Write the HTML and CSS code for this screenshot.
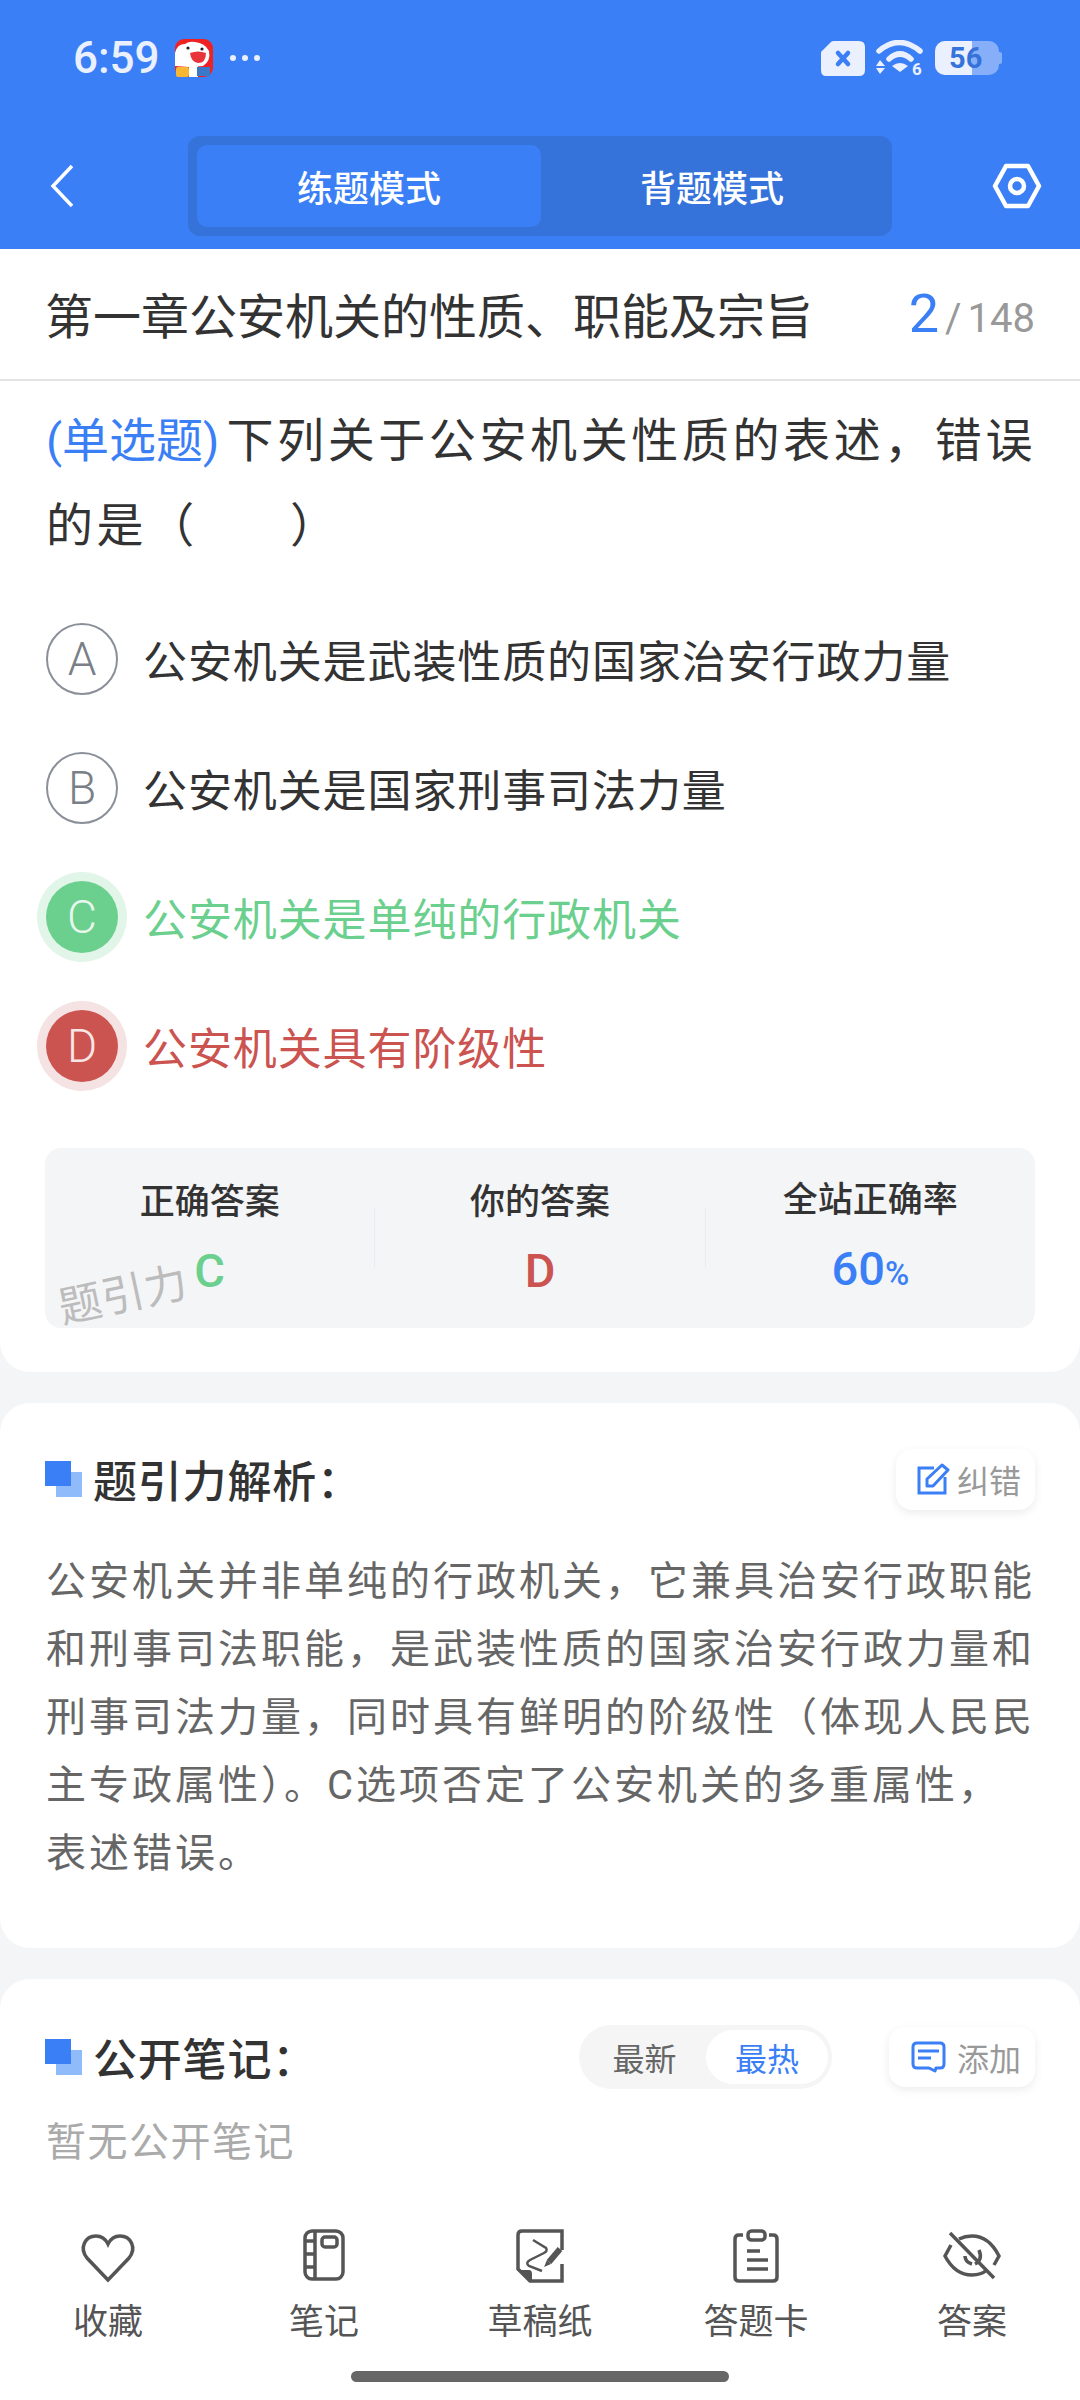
FILE: index.html
```html
<!DOCTYPE html>
<html lang="zh-CN">
<head>
    <meta charset="UTF-8">
    <meta name="viewport" content="width=device-width, initial-scale=1.0">
    <title>练题模式</title>
    <link rel="stylesheet" href="styles.css">
</head>
<body>
    <div class="page">
        <header class="top">
            <div class="status">
                <div class="status-left">
                    <span class="time">6:59</span>
                    <svg class="app-icon" viewBox="0 0 38 38">
                        <rect width="38" height="38" rx="9" fill="#ee2222"/>
                        <path d="M0 14 Q2 5 10 5 Q14 2 20 3 Q30 4 34 12 Q36 22 28 27 L14 28 L0 27 Z" fill="#fff"/>
                        <circle cx="13" cy="9" r="1.6" fill="#222"/>
                        <circle cx="27" cy="10" r="1.6" fill="#222"/>
                        <path d="M15 14 Q23 11 31 14 Q31 24 23 24 Q16 23 15 14 Z" fill="#e8353c"/>
                        <rect x="1" y="28" width="13" height="10" rx="2" fill="#f7b733"/>
                        <rect x="14" y="27" width="9" height="11" fill="#fff"/>
                        <rect x="22" y="28" width="13" height="9" fill="#3c78c8"/>
                    </svg>
                    <span class="dots"><i></i><i></i><i></i></span>
                </div>
                <div class="status-right">
                    <svg class="sim" width="44" height="35" viewBox="0 0 44 35">
                        <path d="M13 0 H38 Q44 0 44 6 V29 Q44 35 38 35 H5 Q0 35 0 29 V12 Q0 10 2 9 L10 1 Q11 0 13 0 Z" fill="#eaf0fe"/>
                        <path d="M17 12 L27 23 M27 12 L17 23" stroke="#3b7ff6" stroke-width="4.5" stroke-linecap="round"/>
                    </svg>
                    <svg class="wifi" width="48" height="42" viewBox="0 0 48 42">
                        <path d="M3 11 Q23 -6 44 11" fill="none" stroke="#eaf0fe" stroke-width="5.5" stroke-linecap="round"/>
                        <path d="M13 19 Q24 9 35 19" fill="none" stroke="#eaf0fe" stroke-width="5.5" stroke-linecap="round"/>
                        <path d="M16 26 Q24 20 32 26 L24 32 Z" fill="#eaf0fe"/>
                        <path d="M4 20 L9 26 H0 Z M0 28 H9 L4 34 Z" fill="#eaf0fe"/>
                        <text x="36" y="35" class="wifi-six">6</text>
                    </svg>
                    <div class="battery">
                        <span class="battery-level"></span>
                        <span class="battery-num">56</span>
                        <span class="battery-tip"></span>
                    </div>
                </div>
            </div>
            <div class="toolbar">
                <svg class="back" width="24" height="44" viewBox="0 0 24 44">
                    <path d="M22 2 L3 22 L22 42" fill="none" stroke="#fff" stroke-width="3.5"/>
                </svg>
                <div class="mode-switch">
                    <div class="mode on">练题模式</div>
                    <div class="mode">背题模式</div>
                </div>
                <svg class="gear" width="50" height="46" viewBox="0 0 50 46">
                    <path d="M14 3 H36 L47 23 L36 43 H14 L3 23 Z" fill="none" stroke="#fff" stroke-width="4.5" stroke-linejoin="round"/>
                    <circle cx="25" cy="23" r="7" fill="none" stroke="#fff" stroke-width="4.5"/>
                </svg>
            </div>
        </header>

        <main class="content">
            <section class="card question-card">
                <div class="chapter">
                    <h1>第一章公安机关的性质、职能及宗旨</h1>
                    <div class="progress"><b>2</b><i>/</i>148</div>
                </div>
                <p class="question"><span class="q-type">(单选题)</span>下列关于公安机关性质的表述，错误的是（&emsp;&ensp;&thinsp;）</p>
                <ul class="options">
                    <li class="option"><span class="letter">A</span>公安机关是武装性质的国家治安行政力量</li>
                    <li class="option"><span class="letter">B</span>公安机关是国家刑事司法力量</li>
                    <li class="option right"><span class="letter">C</span>公安机关是单纯的行政机关</li>
                    <li class="option wrong"><span class="letter">D</span>公安机关具有阶级性</li>
                </ul>
                <div class="summary">
                    <div class="cell">
                        <div class="cell-label">正确答案</div>
                        <div class="cell-value green">C</div>
                    </div>
                    <span class="divider"></span>
                    <div class="cell">
                        <div class="cell-label">你的答案</div>
                        <div class="cell-value red">D</div>
                    </div>
                    <span class="divider"></span>
                    <div class="cell">
                        <div class="cell-label">全站正确率</div>
                        <div class="cell-value blue">60<small>%</small></div>
                    </div>
                    <span class="watermark">题引力</span>
                </div>
            </section>

            <section class="card analysis-card">
                <div class="card-head">
                    <h2 class="card-title"><span class="mark"></span>题引力解析：</h2>
                    <div class="mini-btn fix-btn">
                        <svg width="33" height="32" viewBox="0 0 33 32">
                            <path d="M17 5 H2 V30 H28 V14" fill="none" stroke="#3b7ff6" stroke-width="3"/>
                            <path d="M10 23 V16 L25 2 L31 7 L16 23 Z" fill="none" stroke="#3b7ff6" stroke-width="3" stroke-linejoin="round"/>
                        </svg>
                        纠错
                    </div>
                </div>
                <p class="analysis">公安机关并非单纯的行政机关，它兼具治安行政职能和刑事司法职能，是武装性质的国家治安行政力量和刑事司法力量，同时具有鲜明的阶级性（体现人民民主专政属性）。C选项否定了公安机关的多重属性，表述错误。</p>
            </section>

            <section class="card notes-card">
                <div class="card-head">
                    <h2 class="card-title"><span class="mark"></span>公开笔记：</h2>
                    <div class="notes-tools">
                        <div class="sort">
                            <span class="sort-item">最新</span>
                            <span class="sort-item on">最热</span>
                        </div>
                        <div class="mini-btn add-btn">
                            <svg width="35" height="32" viewBox="0 0 35 32">
                                <path d="M6 2 H29 Q33 2 33 6 V23 Q33 27 29 27 H25 L24 30 L18 27 H6 Q2 27 2 23 V6 Q2 2 6 2 Z" fill="none" stroke="#3b7ff6" stroke-width="3" stroke-linejoin="round"/>
                                <path d="M7 10 H28 M7 17 H20" stroke="#3b7ff6" stroke-width="3"/>
                            </svg>
                            添加
                        </div>
                    </div>
                </div>
                <p class="empty">暂无公开笔记</p>
            </section>
        </main>

        <nav class="bottom">
            <div class="tabs">
                <div class="tab">
                    <svg viewBox="0 0 60 60"><path d="M30 54 L9 32 C1 22 7 10 18 10 C24 10 28 14 30 18 C32 14 36 10 42 10 C53 10 59 22 51 32 Z"/></svg>
                    收藏
                </div>
                <div class="tab">
                    <svg viewBox="0 0 60 60">
                        <rect x="11" y="5" width="38" height="48" rx="7"/>
                        <path d="M21 5 V53 M11 15 H21 M11 28 H21 M11 41 H21"/>
                        <rect x="28" y="11" width="15" height="10" rx="3"/>
                    </svg>
                    笔记
                </div>
                <div class="tab">
                    <svg viewBox="0 0 60 60">
                        <path d="M52 24 V5 H12 Q8 5 8 9 V43 L20 55 H52 V38"/>
                        <path d="M8 44 H19 Q22 44 22 48 V55 Z" class="solid"/>
                        <path d="M23 14 L36 22 Q38 25 34 27 L20 34 Q15 37 19 40 L32 45" stroke-width="2.5"/>
                        <path d="M50 23 L39 36" stroke-width="6"/>
                        <path d="M37 34 L41 38 L34 41 Z" class="solid"/>
                    </svg>
                    草稿纸
                </div>
                <div class="tab">
                    <svg viewBox="0 0 60 60">
                        <path d="M17 9 H13 Q9 9 9 13 V51 Q9 55 13 55 H47 Q51 55 51 51 V13 Q51 9 47 9 H43"/>
                        <rect x="22" y="5" width="17" height="9" rx="3.5"/>
                        <path d="M21 25 H34 M21 34 H42 M21 43 H42"/>
                    </svg>
                    答题卡
                </div>
                <div class="tab">
                    <svg viewBox="0 0 60 60">
                        <path d="M9 19 L3 30 Q13 49 30 49 Q39 49 45 44 M17 13 Q23 10 30 10 Q47 10 57 30 L52 39"/>
                        <path d="M8 7 L52 52"/>
                        <path d="M37 24 Q41 34 33 38 M23 30 Q23 36 30 38"/>
                    </svg>
                    答案
                </div>
            </div>
            <div class="home-bar"></div>
        </nav>
    </div>
</body>
</html>
```

FILE: styles.css
```css
* {
    box-sizing: border-box;
}
html, body {
    margin: 0;
    padding: 0;
}
body {
    width: 1080px;
    height: 2400px;
    overflow: hidden;
    font-family: 'Roboto', 'Noto Sans CJK SC', sans-serif;
    background-color: #f4f5f7;
    color: #333;
}
h1, h2, p, ul {
    margin: 0;
    padding: 0;
}
ul {
    list-style: none;
}
.page {
    display: flex;
    flex-direction: column;
    height: 2400px;
}

/* header */
.top {
    flex: none;
    height: 249px;
    background-color: #3b7ff6;
}
.status {
    display: flex;
    justify-content: space-between;
    align-items: center;
    height: 116px;
    padding: 0 80px 0 73px;
}
.status-left, .status-right {
    display: flex;
    align-items: center;
}
.time {
    font-size: 44px;
    font-weight: 500;
    color: #eaf0fe;
    margin-right: 15px;
}
.app-icon {
    width: 38px;
    height: 38px;
    margin-right: 17px;
}
.dots {
    display: flex;
    gap: 6px;
}
.dots i {
    width: 6px;
    height: 6px;
    border-radius: 50%;
    background-color: #eaf0fe;
}
.status-right {
    gap: 11px;
}
.wifi {
    margin-bottom: -6px;
}
.wifi-six {
    font-family: 'Roboto', sans-serif;
    font-size: 17px;
    font-weight: 700;
    fill: #eaf0fe;
}
.battery {
    position: relative;
    width: 64px;
    height: 34px;
    background-color: #86aef9;
    border-radius: 10px;
    margin-right: 1px;
}
.battery-level {
    position: absolute;
    left: 0;
    top: 0;
    bottom: 0;
    width: 37px;
    background-color: #eaf0fe;
    border-radius: 10px 0 0 10px;
}
.battery-num {
    position: absolute;
    left: 14px;
    top: 0;
    line-height: 34px;
    font-size: 29px;
    font-weight: 700;
    color: #3573db;
}
.battery-tip {
    position: absolute;
    right: -3px;
    top: 11px;
    width: 3px;
    height: 12px;
    background-color: #86aef9;
    border-radius: 0 2px 2px 0;
}
.toolbar {
    display: flex;
    align-items: center;
    margin-top: 20px;
    padding-left: 50px;
    height: 100px;
}
.mode-switch {
    display: flex;
    width: 704px;
    height: 100px;
    margin: 0 100px 0 114px;
    padding: 9px;
    background-color: #3573db;
    border-radius: 12px;
}
.mode {
    flex: 1;
    display: flex;
    align-items: center;
    justify-content: center;
    font-size: 36px;
    font-weight: 500;
    color: #fff;
    border-radius: 10px;
}
.mode.on {
    background-color: #3b7ff6;
    flex: none;
    width: 344px;
}

/* main area */
.content {
    flex: 1;
    min-height: 0;
    overflow: hidden;
    display: flex;
    flex-direction: column;
    gap: 31px;
}
.card {
    flex: none;
    background-color: #fff;
    border-radius: 30px;
}
.question-card {
    height: 1123px;
    border-radius: 0 0 30px 30px;
}
.chapter {
    display: flex;
    justify-content: space-between;
    align-items: center;
    height: 132px;
    padding: 0 45px 2px;
    border-bottom: 2px solid #e3e3e3;
}
.chapter h1 {
    font-size: 48px;
    font-weight: 400;
    color: #333;
}
.progress {
    font-size: 40px;
    color: #999;
}
.progress b {
    font-size: 54px;
    font-weight: 400;
    color: #3b7ff6;
}
.progress i {
    font-style: normal;
    margin: 0 6px;
}
.question {
    padding: 17px 38px 0 46px;
    font-size: 47px;
    line-height: 85px;
    letter-spacing: 3.6px;
    color: #333;
}
.q-type {
    margin-right: 7px;
    letter-spacing: 0;
    color: #3b7ff6;
}
.options {
    margin-top: 26px;
}
.option {
    display: flex;
    align-items: center;
    height: 129px;
    padding-left: 46px;
    font-size: 44px;
    letter-spacing: 0.9px;
    color: #333;
}
.letter {
    flex: none;
    display: flex;
    align-items: center;
    justify-content: center;
    width: 72px;
    height: 72px;
    margin-right: 25px;
    border: 2px solid #8a8f99;
    border-radius: 50%;
    font-size: 46px;
    font-weight: 300;
    letter-spacing: 0;
    color: #7a7f88;
}
.option.right {
    color: #6bcf8e;
}
.option.wrong {
    color: #cb5350;
}
.option.right .letter {
    border: none;
    background-color: #6bcf8e;
    color: #e6f7ec;
    box-shadow: 0 0 0 9px #e1f5e9;
}
.option.wrong .letter {
    border: none;
    background-color: #cb5350;
    color: #f8e6e6;
    box-shadow: 0 0 0 9px #f5e2e2;
}
.summary {
    position: relative;
    display: flex;
    align-items: center;
    height: 180px;
    margin: 38px 45px 0;
    background-color: #f4f5f7;
    border-radius: 16px;
}
.cell {
    flex: 1;
    text-align: center;
}
.divider {
    flex: none;
    width: 1px;
    height: 60px;
    background-color: #e9ebee;
}
.cell-label {
    font-size: 35px;
    font-weight: 500;
    line-height: 52px;
    color: #333;
}
.cell-value {
    font-size: 47px;
    font-weight: 500;
    line-height: 56px;
    margin-top: 14px;
}
.cell-value small {
    font-size: 33px;
}
.green {
    color: #6bcf8e;
}
.red {
    color: #cb5350;
}
.blue {
    color: #3b7ff6;
}
.watermark {
    position: absolute;
    left: 12px;
    top: 112px;
    font-size: 43px;
    letter-spacing: 0.5px;
    color: #bcbcbc;
    transform: rotate(-12deg);
}
.analysis-card {
    height: 545px;
}
.card-head {
    display: flex;
    justify-content: space-between;
    align-items: center;
    padding: 44px 45px 0;
}
.notes-card .card-head {
    padding-top: 46px;
}
.card-title {
    display: flex;
    align-items: center;
    font-size: 44px;
    font-weight: 500;
    letter-spacing: 0.8px;
    color: #333;
}
.mark {
    width: 37px;
    height: 36px;
    margin-right: 11px;
    background: linear-gradient(#3b7ff6, #3b7ff6) 0 0 / 26px 25px no-repeat,
                linear-gradient(#8fbbfb, #8fbbfb) 11px 11px / 26px 25px no-repeat;
}
.mini-btn {
    display: flex;
    align-items: center;
    background-color: #fff;
    border-radius: 16px;
    box-shadow: 0 3px 10px rgba(0, 0, 0, 0.08);
    font-size: 32px;
    color: #999;
}
.fix-btn {
    height: 61px;
    gap: 7px;
    padding: 0 14px 0 21px;
}
.add-btn {
    height: 60px;
    gap: 11px;
    padding: 0 14px 0 22px;
}
.analysis {
    margin-top: 37px;
    padding: 0 45px 0 46px;
    font-size: 40px;
    line-height: 68px;
    letter-spacing: 3px;
    color: #666;
}
.notes-card {
    flex: 1;
    border-radius: 30px 30px 0 0;
}
.notes-tools {
    display: flex;
    align-items: center;
    gap: 57px;
}
.sort {
    display: flex;
    width: 253px;
    height: 64px;
    padding: 5px 4px;
    background-color: #f5f5f5;
    border-radius: 32px;
}
.sort-item {
    flex: 1;
    display: flex;
    align-items: center;
    justify-content: center;
    font-size: 32px;
    color: #666;
    border-radius: 27px;
}
.sort-item.on {
    flex: none;
    width: 122px;
    background-color: #fff;
    color: #3b7ff6;
}
.empty {
    padding: 21px 46px 0;
    font-size: 40px;
    letter-spacing: 1.5px;
    color: #aaa;
}

/* bottom bar */
.bottom {
    flex: none;
    height: 200px;
    background-color: #fff;
}
.tabs {
    display: flex;
    padding-top: 26px;
}
.tab {
    flex: 1;
    display: flex;
    flex-direction: column;
    align-items: center;
    font-size: 35px;
    line-height: 50px;
    color: #555;
}
.tab svg {
    width: 60px;
    height: 60px;
    margin-bottom: 12px;
    fill: none;
    stroke: #555;
    stroke-width: 3.5;
}
.tab svg .solid {
    fill: #555;
    stroke: none;
}
.home-bar {
    width: 378px;
    height: 11px;
    margin: 23px auto 0;
    background-color: #666;
    border-radius: 6px;
}
```
